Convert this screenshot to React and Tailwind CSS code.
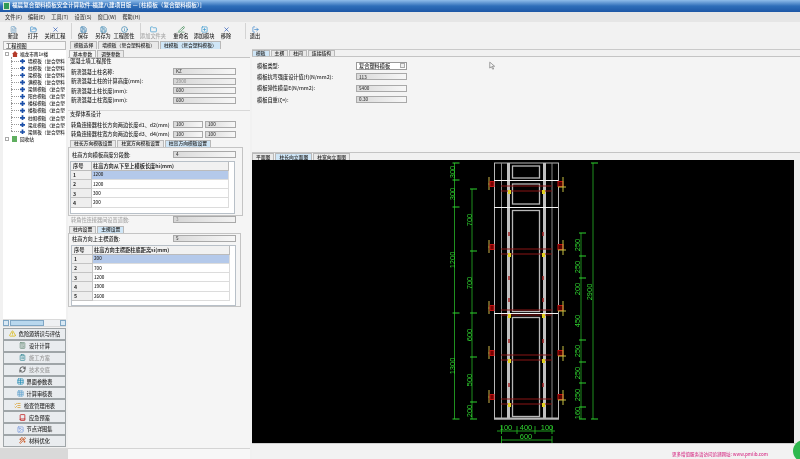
import React from "react";
import { FileText, FolderOpen, X, Save, Info, Folder, PencilLine, SquarePlus, LogOut, TriangleAlert, Calculator, ClipboardList, RefreshCw, Table, Grid3x3, ListChecks, Book, Image, Wand2 } from "lucide-react";

const Tab = ({ children, active, className = "" }) => (
  <div className={`h-full px-[3px] flex items-center whitespace-nowrap text-[4.8px] border border-b-0 border-[#b9b9b9] ${active ? "bg-[#cfe6f7]" : "bg-[#e9e9e9]"} ${className}`}>{children}</div>
);

const Field = ({ children, muted, className = "w-[63px]" }) => (
  <div className={`h-[7px] border border-[#a9a9a9] flex items-center pl-[2px] text-[4.5px] bg-gradient-to-r ${muted ? "from-[#d6d6d6] to-[#f2f2f2] text-[#999]" : "from-[#dadada] to-[#f7f7f7] text-[#444]"} ${className}`}>{children}</div>
);

const Row = ({ label, value, muted, mutedLabel, className = "" }) => (
  <div className={`flex items-center justify-between h-[7px] ${className}`}>
    <span className={mutedLabel ? "text-[#aaa]" : ""}>{label}</span>
    <Field muted={muted}>{value}</Field>
  </div>
);

const DataTable = ({ title, rows, className }) => (
  <div className={`border border-[#b8c0c8] bg-white ${className}`}>
    <div className="flex h-[9px] w-[158px] bg-[#f1f1f1] font-bold">
      <div className="w-[21px] border-r border-b border-[#bbb] flex items-center pl-[2px]">序号</div>
      <div className="flex-1 border-r border-b border-[#bbb] flex items-center pl-[1px]">{title}</div>
    </div>
    {rows.map((r, i) => (
      <div key={r} className="flex h-[9.33px] w-[158px]">
        <div className="w-[21px] bg-[#eeeeee] border-r border-b border-[#c4c4c4] flex items-center pl-[2px] font-bold">{i + 1}</div>
        <div className={`flex-1 border-r border-b border-[#dcdcdc] flex items-center pl-[1px] text-[4.5px] ${i === 0 ? "bg-[#b4c9ea]" : "bg-white"}`}>{r}</div>
      </div>
    ))}
  </div>
);

const tools = [
  { w: "w-[20px] ml-[3px]", t: "新建", I: FileText, c: "text-[#6f9fc4]" },
  { w: "w-[20px]", t: "打开", I: FolderOpen, c: "text-[#2f86c9]" },
  { w: "w-[24px]", t: "关闭工程", I: X, c: "text-[#2455b5]" },
  { sep: true },
  { w: "w-[22px]", t: "保存", I: Save, c: "text-[#1d6fa8]" },
  { w: "w-[18px]", t: "另存为", I: Save, c: "text-[#2c7fae]" },
  { w: "w-[24px]", t: "工程属性", I: Info, c: "text-[#2c7fae]" },
  { sep: true },
  { w: "w-[24px]", t: "添加文件夹", I: Folder, c: "text-[#2f94cf]", off: true },
  { w: "w-[32px]", t: "重命名", I: PencilLine, c: "text-[#3f8a54]" },
  { w: "w-[14px]", t: "添加模块", I: SquarePlus, c: "text-[#2f94cf]" },
  { w: "w-[30px]", t: "移除", I: X, c: "text-[#2455b5]" },
  { sep: true },
  { w: "w-[18px]", t: "退出", I: LogOut, c: "text-[#2f7fc9]" },
];

const treeItems = ["墙模板（复合塑料", "柱模板（复合塑料", "梁模板（复合塑料", "满模板（复合塑料", "梁侧模板（复合塑", "阳台模板（复合塑", "楼梯模板（复合塑", "楼板模板（复合塑", "柱帽模板（复合塑", "梁底模板（复合塑", "梁侧板（复合塑料"];

const sideButtons = [
  { t: "危险源辨识与评估", I: TriangleAlert, c: "text-[#d8b400]" },
  { t: "设计计算", I: Calculator, c: "text-[#6d8f7c]" },
  { t: "施工方案", I: ClipboardList, c: "text-[#3f8f9c]", off: true },
  { t: "技术交底", I: RefreshCw, c: "text-[#333]", off: true },
  { t: "界面参数表", I: Table, c: "text-[#2a8fb8]" },
  { t: "计算审核表", I: Grid3x3, c: "text-[#6aa7d0]" },
  { t: "检查管理用表", I: ListChecks, c: "text-[#d89a20]" },
  { t: "应急预案", I: Book, c: "text-[#c01010]" },
  { t: "节点详图集", I: Image, c: "text-[#7f9fe0]" },
  { t: "材料优化", I: Wand2, c: "text-[#c8501a]" },
];

const G = "#2fd32f";
const DimText = ({ x, y, children, rot }) => (
  <text x={x} y={y} fill={G} fontSize="7.5" fontFamily="Liberation Sans, sans-serif" textAnchor="middle" transform={rot ? `rotate(-90 ${x} ${y})` : undefined}>{children}</text>
);

const Clamp = ({ y }) => (
  <g>
    <path d={`M489 ${y - 7}V${y + 6} M488 ${y}H494`} stroke="#8a7a30" strokeWidth="1.5" fill="none" />
    <rect x="490" y={y - 2.5} width="4" height="5" fill="#700" stroke="#c01010" />
    <rect x="558" y={y - 2.5} width="5" height="5" fill="#500" stroke="#c01010" />
    <path d={`M563 ${y - 7}V${y + 8} M558 ${y + 3}H566`} stroke="#c8c040" strokeWidth="1" fill="none" />
    <path d={`M501 ${y + 2}H552 M501 ${y + 7}H552`} stroke="#8a1414" strokeWidth="1" fill="none" />
    <rect x="508" y={y + 6} width="3" height="4" fill="#e0d020" />
    <rect x="542" y={y + 6} width="3" height="4" fill="#e0d020" />
  </g>
);

const Ticks = ({ x, ys }) => (
  <g>
    <path d={`M${x} ${ys[0]}V${ys[ys.length - 1]}`} stroke="#1f8f1f" strokeWidth="1" />
    {ys.map((y) => <path key={y} d={`M${x - 2} ${y}H${x + 5}`} stroke={G} strokeWidth="1" />)}
  </g>
);

const Drawing = () => (
  <svg viewBox="252 160 542 283" className="w-[542px] h-[283px] block">
    <g fill="none" stroke="#b8b8b8">
      <rect x="494.5" y="163" width="64" height="256" />
      <path d="M501.5 163V419 M552 163V419" stroke="#8a8a8a" />
      <path d="M508.5 163V419 M544.5 163V419" strokeWidth="3" stroke="#c0c0c0" />
      <rect x="512.5" y="166" width="27" height="12" strokeWidth="1.3" />
      <rect x="512.5" y="184" width="27" height="20" strokeWidth="1.3" />
      <rect x="512.5" y="210.5" width="27" height="101" strokeWidth="1.3" />
      <rect x="512.5" y="317.5" width="27" height="99" strokeWidth="1.3" />
      <path d="M494 418.5H559" strokeWidth="2" />
      <path d="M494 180.5H558 M494 207.5H558 M494 313.5H558" stroke="#f4f4f4" strokeWidth="1.2" />
    </g>
    <path d="M509 232V236 M543 232V236 M509 276V280 M543 276V280 M509 298V302 M543 298V302 M509 339V343 M543 339V343 M509 383V387 M543 383V387" stroke="#a02020" strokeWidth="1.5" />
    {[184, 247, 308, 353, 397].map((y) => <Clamp key={y} y={y} />)}
    <Ticks x={454.5} ys={[163, 180, 207, 313, 419]} />
    <Ticks x={472} ys={[189, 251, 313, 357, 402, 419]} />
    <Ticks x={581} ys={[233, 256, 278, 340, 362, 383, 407, 419]} />
    <Ticks x={593} ys={[163, 419]} />
    <DimText x={455} y={172} rot>300</DimText>
    <DimText x={455} y={194} rot>300</DimText>
    <DimText x={455} y={260} rot>1200</DimText>
    <DimText x={455} y={366} rot>1300</DimText>
    <DimText x={472} y={220} rot>700</DimText>
    <DimText x={472} y={283} rot>700</DimText>
    <DimText x={472} y={335} rot>600</DimText>
    <DimText x={472} y={380} rot>500</DimText>
    <DimText x={472} y={411} rot>200</DimText>
    <DimText x={580} y={245} rot>250</DimText>
    <DimText x={580} y={267} rot>250</DimText>
    <DimText x={580} y={289} rot>200</DimText>
    <DimText x={580} y={321} rot>450</DimText>
    <DimText x={580} y={351} rot>250</DimText>
    <DimText x={580} y={373} rot>250</DimText>
    <DimText x={580} y={395} rot>250</DimText>
    <DimText x={580} y={413} rot>160</DimText>
    <DimText x={592} y={292} rot>2900</DimText>
    <path d="M497 431H555 M501.5 426V434 M517 426V434 M535 426V434 M552 426V434 M501.5 440H552 M501.5 436V443 M552 436V443" stroke="#1f9f1f" fill="none" />
    <DimText x={506} y={430}>100</DimText>
    <DimText x={526} y={430}>400</DimText>
    <DimText x={547} y={430}>100</DimText>
    <DimText x={526} y={439}>600</DimText>
  </svg>
);

export default function App() {
  return (
    <div className="w-[800px] h-[459px] overflow-hidden flex flex-col bg-[#f1f1f1] text-[#2b2b2b] text-[5.2px] leading-none font-medium blur-[0.35px]" style={{ fontFamily: '"Noto Sans CJK SC", "Noto Sans", sans-serif' }}>
      {/* title */}
      <div className="h-[12px] flex items-center gap-[2px] pl-[3px] bg-gradient-to-b from-[#8fbdea] via-[#2f6fb9] to-[#1d57a6] text-white text-[5.6px] font-medium shrink-0">
        <div className="w-[7px] h-[8px] bg-[#2f9a55] border border-[#d8e8d8]" />
        <span className="whitespace-nowrap">福晨复合塑料模板安全计算软件-福建八建项目版 — [柱模板（复合塑料模板）]</span>
      </div>
      {/* menu */}
      <div className="h-[10px] bg-[#e6e6e6] flex items-center gap-[6px] pl-[5px] shrink-0 text-[#444]">
        {["文件(F)", "编辑(E)", "工具(T)", "设置(S)", "窗口(W)", "帮助(H)"].map((m) => <span key={m} className="whitespace-nowrap">{m}</span>)}
      </div>
      {/* toolbar */}
      <div className="h-[18px] bg-[#f2f2f2] flex shrink-0">
        {tools.map((t, i) => t.sep ? (
          <div key={i} className="w-[5px] flex justify-end py-[1px]"><div className="w-px bg-[#d4d4d4]" /></div>
        ) : (
          <div key={i} className={`${t.w} flex flex-col items-center pt-[3.5px] gap-[0.5px]`}>
            <t.I size={7} strokeWidth={2.2} className={t.c} />
            <span className={`whitespace-nowrap ${t.off ? "text-[#aaa]" : ""}`}>{t.t}</span>
          </div>
        ))}
      </div>

      {/* body */}
      <div className="flex-1 flex min-h-0">
        {/* left */}
        <div className="w-[68px] shrink-0 flex flex-col">
          <div className="pl-[3px] pr-[2px] flex flex-col">
            <div className="h-[9px] border border-[#bdbdbd] bg-[#f6f6f6] flex items-center pl-[2px] mt-[1px]">工程视图</div>
            <div className="h-[269px] bg-white relative overflow-hidden pt-[0.5px]">
              <div className="flex items-center h-[7px] pl-[2px] gap-[1px] whitespace-nowrap">
                <span className="w-[4px] h-[4px] border border-[#aaa] mr-[2px] shrink-0" />
                <span className="w-[6px] h-[6px] bg-[#b33a2a] shrink-0 [clip-path:polygon(50%_0,100%_50%,85%_50%,85%_100%,15%_100%,15%_50%,0_50%)]" />
                <span className="ml-[1px] text-[4.6px]">福龙市南1#楼</span>
              </div>
              {treeItems.map((t) => (
                <div key={t} className="flex items-center h-[7.1px] pl-[17px] gap-[3px] whitespace-nowrap relative text-[4.6px]">
                  <span className="absolute left-[8px] w-[8px] border-t border-dotted border-[#999]" />
                  <span className="relative w-[5px] h-[5px] shrink-0 bg-[#1b4fa8] [clip-path:polygon(33%_0,67%_0,67%_33%,100%_33%,100%_67%,67%_67%,67%_100%,33%_100%,33%_67%,0_67%,0_33%,33%_33%)]" />
                  <span>{t}</span>
                </div>
              ))}
              <div className="absolute left-[8px] top-[7px] h-[74px] border-l border-dotted border-[#999]" />
              <div className="flex items-center h-[7px] pl-[2px] gap-[1px] whitespace-nowrap">
                <span className="w-[4px] h-[4px] border border-[#aaa] mr-[2px] shrink-0" />
                <span className="w-[5px] h-[6px] bg-[#5fae5f] shrink-0" />
                <span className="ml-[2px] text-[4.6px]">回收站</span>
              </div>
            </div>
            <div className="h-[8px] flex items-center bg-[#eef0f2] gap-[1px] border-y border-[#dadada] shrink-0">
              <div className="w-[6px] h-[6px] border border-[#7fa6c4] bg-[#d8e8f4]" />
              <div className="w-[34px] h-[6px] border border-[#7fa6c4] bg-[#b9d8ee]" />
              <div className="flex-1" />
              <div className="w-[6px] h-[6px] border border-[#7fa6c4] bg-[#d8e8f4]" />
            </div>
            <div className="flex flex-col mt-[1px]">
              {sideButtons.map((b) => (
                <div key={b.t} className="h-[11.9px] bg-[#e9ecef] border border-[#9fa5a8] flex items-center justify-center gap-[3px] whitespace-nowrap">
                  <b.I size={7} strokeWidth={2.5} className={b.c} />
                  <span className={b.off ? "text-[#999]" : ""}>{b.t}</span>
                </div>
              ))}
            </div>
          </div>
          <div className="flex-1 bg-[#d9d9d9] mt-[1px]" />
        </div>

        {/* middle */}
        <div className="w-[182px] shrink-0 flex flex-col">
          <div className="flex h-[9px] pt-[1px] pl-[2px] shrink-0 gap-[1px]">
            <Tab>模板选择</Tab>
            <Tab>墙模板（复合塑料模板）</Tab>
            <Tab active>柱模板（复合塑料模板）</Tab>
          </div>
          <div className="flex h-[7px] shrink-0 mt-[1px] pl-[1px] gap-[1px]">
            <Tab active className="!bg-[#f5f5f5]">基本参数</Tab>
            <Tab>调整参数</Tab>
          </div>
          <div className="flex flex-col bg-[#f5f5f5] border-t border-[#c4c4c4] flex-1">
            <div className="pl-[2px] h-[6px] flex items-center">混凝土墙工程属性</div>
            <div className="mt-[4px] flex flex-col gap-[2.5px] pl-[3px] pr-[14px]">
              <Row label="新浇混凝土柱名称:" value="KZ" />
              <Row label="新浇混凝土柱的计算高度(mm):" value="2900" muted />
              <Row label="新浇混凝土柱长度(mm):" value="600" />
              <Row label="新浇混凝土柱宽度(mm):" value="600" />
            </div>
            <div className="mt-[6.5px] border-t border-[#d8d8d8] pl-[2px] h-[6px] flex items-center">支撑体系设计</div>
            <div className="mt-[5px] flex flex-col gap-[2.5px] pl-[3px] pr-[14px]">
              {["转角连接器柱长方向两边长度d1、d2(mm)", "转角连接器柱宽方向两边长度d3、d4(mm)"].map((l) => (
                <div key={l} className="flex items-center h-[7px]">
                  <span className="flex-1 whitespace-nowrap">{l}</span>
                  <Field className="w-[30px] mr-[2px]">100</Field>
                  <Field className="w-[31px]">100</Field>
                </div>
              ))}
            </div>
            <div className="flex h-[7px] mt-[2px] pl-[2px] shrink-0 gap-[1px]">
              <Tab>柱长方向模板设置</Tab>
              <Tab>柱宽方向模板设置</Tab>
              <Tab active>柱高方向模板设置</Tab>
            </div>
            <div className="border border-[#c4c4c4] h-[69px] pt-[3.5px] mr-[7px]">
              <Row label="柱高方向模板高度分段数:" value="4" className="pl-[3px] pr-[6px]" />
              <DataTable className="mt-[2.5px] ml-[1px] mr-[7px] h-[53px]" title="柱高方向从下至上模板长度hi(mm)" rows={["1200", "1200", "300", "200"]} />
            </div>
            <div className="mt-[0.5px] pl-[3px] pr-[14px]">
              <Row label="转角性连接器间设置道数:" value="3" muted mutedLabel />
            </div>
            <div className="flex h-[7px] mt-[2.5px] pl-[1px] shrink-0 gap-[1px]">
              <Tab>柱内设置</Tab>
              <Tab active>主楞设置</Tab>
            </div>
            <div className="border border-[#c4c4c4] h-[74px] pt-[1.5px] mr-[9px]">
              <Row label="柱高方向上主楞道数:" value="5" className="pl-[3px] pr-[4px]" />
              <DataTable className="mt-[2.5px] ml-[2px] mr-[4px] h-[61px]" title="柱高方向主楞距柱底距离si(mm)" rows={["200", "700", "1200", "1900", "2600"]} />
            </div>
            <div className="flex-1" />
            <div className="h-[11px] border-t border-[#d4d4d4] bg-[#f7f7f7]" />
          </div>
        </div>

        {/* right */}
        <div className="flex-1 min-w-0 flex flex-col ml-[2px]">
          <div className="h-[10px] shrink-0 border-b border-[#c9c9c9]" />
          <div className="flex h-[7px] shrink-0 gap-[1px] border-b border-[#c4c4c4]">
            <Tab active>模板</Tab>
            <Tab>主楞</Tab>
            <Tab>柱间</Tab>
            <Tab>连接结构</Tab>
          </div>
          <div className="h-[95px] shrink-0 relative pl-[5px] pt-[5px] flex flex-col gap-[4.3px] bg-[#f4f4f4]">
            <div className="flex items-center h-[7px]">
              <span className="w-[99px] whitespace-nowrap">模板类型:</span>
              <div className="w-[51px] h-[8px] border border-[#999] bg-white flex items-center justify-between pl-[2px]">复合塑料模板<span className="w-[5px] h-[5px] border border-[#aaa] bg-[#eee] mr-[1px]" /></div>
            </div>
            {[["模板抗弯强度设计值[f](N/mm2):", "113"], ["模板弹性模量E(N/mm2):", "5400"], ["模板自重(ζ=):", "0.30"]].map(([l, v]) => (
              <div key={l} className="flex items-center h-[7px]">
                <span className="w-[99px] whitespace-nowrap">{l}</span>
                <Field className="w-[51px]">{v}</Field>
              </div>
            ))}
            <svg viewBox="0 0 8 11" className="absolute left-[237px] top-[4px] w-[6px] h-[9px]"><path d="M1 1V9L3 7L5 10.5L6.2 10L4.5 6.5H7.5Z" fill="#f6f6f6" stroke="#666" strokeWidth="0.8" /></svg>
          </div>
          <div className="flex h-[8px] shrink-0 gap-[1px] border-t border-[#c4c4c4]">
            <Tab>平面图</Tab>
            <Tab active>柱长向立面图</Tab>
            <Tab>柱宽向立面图</Tab>
          </div>
          <div className="h-[283px] shrink-0 flex">
            <div className="w-[542px] bg-black"><Drawing /></div>
            <div className="flex-1 bg-[#ececec]" />
          </div>
          <div className="flex-1 relative border-t border-[#cfcfcf] bg-[#f2f2f2] flex items-center justify-end pr-[32px] pt-[5px]">
            <span className="whitespace-nowrap text-[#d83a8c] text-[4.5px]">更多增值服务请访问追溯网址: www.pmlib.com</span>
            <span className="absolute right-[-15px] bottom-[-3px] w-[22px] h-[22px] rounded-full bg-[#2fb84f]" />
          </div>
        </div>
      </div>
    </div>
  );
}
